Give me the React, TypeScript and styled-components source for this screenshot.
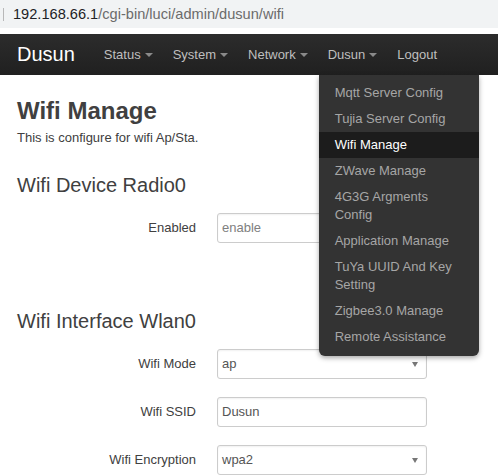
import React from "react";
import styled, { createGlobalStyle } from "styled-components";

const GlobalStyle = createGlobalStyle`
  html, body {
    margin: 0;
    padding: 0;
    background: #fff;
  }
  body {
    font-family: "Liberation Sans", Arial, Helvetica, sans-serif;
    font-size: 13px;
    line-height: 18px;
    color: #404040;
  }
`;

const Page = styled.div`
  position: relative;
  width: 498px;
  height: 475px;
  overflow: hidden;
`;

const AddressBar = styled.div`
  height: 28px;
  background: #f1f3f4;
  display: flex;
  align-items: center;
  padding-left: 3px;
  margin-bottom: 6px;
  font-size: 14.6px;
  color: #6b6b6b;
`;

const Divider = styled.span`
  width: 1px;
  height: 13px;
  background: #b8b8b8;
  margin-right: 9px;
`;

const Host = styled.span`
  color: #202124;
`;

const Navbar = styled.nav`
  position: relative;
  height: 41px;
  background: linear-gradient(#2c2c2c, #202020);
  display: flex;
  align-items: center;
  padding-left: 17px;
`;

const Brand = styled.a`
  font-size: 20px;
  color: #fff;
  margin-right: 19px;
  line-height: 41px;
`;

const NavItem = styled.div`
  position: relative;
  height: 41px;
  display: flex;
  align-items: center;
  padding: 0 10px;
  color: #bfbfbf;
  font-size: 13px;
`;

const Caret = styled.span`
  display: inline-block;
  width: 0;
  height: 0;
  margin-left: 4px;
  margin-top: 1px;
  border-left: 4px solid transparent;
  border-right: 4px solid transparent;
  border-top: 4px solid #8a8a8a;
`;

const Menu = styled.ul`
  position: absolute;
  top: 41px;
  left: 1px;
  width: 160px;
  margin: 0;
  padding: 5px 0 6px;
  list-style: none;
  background: #333;
  border-radius: 0 0 6px 6px;
  box-shadow: 0 2px 5px rgba(0, 0, 0, 0.35);
  z-index: 10;
`;

const MenuItem = styled.li<{ $active?: boolean }>`
  padding: 4px 15px 4px 16px;
  line-height: 18px;
  font-size: 13px;
  color: ${({ $active }) => ($active ? "#fff" : "#a6a6a6")};
  background: ${({ $active }) => ($active ? "#1c1c1c" : "transparent")};
`;

const Content = styled.main`
  padding: 22px 17px 0;
`;

const Title = styled.h2`
  margin: 0;
  font-size: 24px;
  line-height: 28px;
  font-weight: bold;
  color: #404040;
`;

const Description = styled.p`
  margin: 4px 0 0;
`;

const SectionTitle = styled.h3<{ $gap: number }>`
  margin: ${({ $gap }) => $gap}px 0 16px;
  font-size: 20px;
  line-height: 24px;
  font-weight: normal;
  color: #404040;
`;

const Row = styled.div`
  display: flex;
  align-items: center;
  margin-bottom: 18px;
`;

const Label = styled.label`
  width: 179px;
  text-align: right;
  margin-right: 21px;
  font-size: 13px;
`;

const Field = styled.div`
  position: relative;
  box-sizing: border-box;
  width: 210px;
  height: 30px;
  border: 1px solid #ccc;
  border-radius: 3px;
  box-shadow: inset 0 1px 2px rgba(0, 0, 0, 0.06);
  display: flex;
  align-items: center;
  padding-left: 4px;
`;

const FieldText = styled.span<{ $muted?: boolean }>`
  color: ${({ $muted }) => ($muted ? "#808080" : "#555")};
  font-size: 13px;
`;

const Arrow = styled.span`
  position: absolute;
  right: 8px;
  top: 12px;
  width: 0;
  height: 0;
  border-left: 3px solid transparent;
  border-right: 3px solid transparent;
  border-top: 5px solid #777;
`;

const menuItems = [
  "Mqtt Server Config",
  "Tujia Server Config",
  "Wifi Manage",
  "ZWave Manage",
  "4G3G Argments Config",
  "Application Manage",
  "TuYa UUID And Key Setting",
  "Zigbee3.0 Manage",
  "Remote Assistance",
];

const FormRow = ({
  label,
  value,
  select,
  muted,
}: {
  label: string;
  value: string;
  select?: boolean;
  muted?: boolean;
}) => (
  <Row>
    <Label>{label}</Label>
    <Field>
      <FieldText $muted={muted}>{value}</FieldText>
      {select && <Arrow />}
    </Field>
  </Row>
);

export default function App() {
  return (
    <Page>
      <GlobalStyle />
      <AddressBar>
        <Divider />
        <Host>192.168.66.1</Host>/cgi-bin/luci/admin/dusun/wifi
      </AddressBar>

      <Navbar>
        <Brand>Dusun</Brand>
        <NavItem>
          Status<Caret />
        </NavItem>
        <NavItem>
          System<Caret />
        </NavItem>
        <NavItem>
          Network<Caret />
        </NavItem>
        <NavItem>
          Dusun<Caret />
          <Menu>
            {menuItems.map((item) => (
              <MenuItem key={item} $active={item === "Wifi Manage"}>
                {item}
              </MenuItem>
            ))}
          </Menu>
        </NavItem>
        <NavItem>Logout</NavItem>
      </Navbar>

      <Content>
        <Title>Wifi Manage</Title>
        <Description>This is configure for wifi Ap/Sta.</Description>

        <SectionTitle $gap={26}>Wifi Device Radio0</SectionTitle>
        <FormRow label="Enabled" value="enable" muted />

        <SectionTitle $gap={66}>Wifi Interface Wlan0</SectionTitle>
        <FormRow label="Wifi Mode" value="ap" select />
        <FormRow label="Wifi SSID" value="Dusun" />
        <FormRow label="Wifi Encryption" value="wpa2" select />
      </Content>
    </Page>
  );
}
